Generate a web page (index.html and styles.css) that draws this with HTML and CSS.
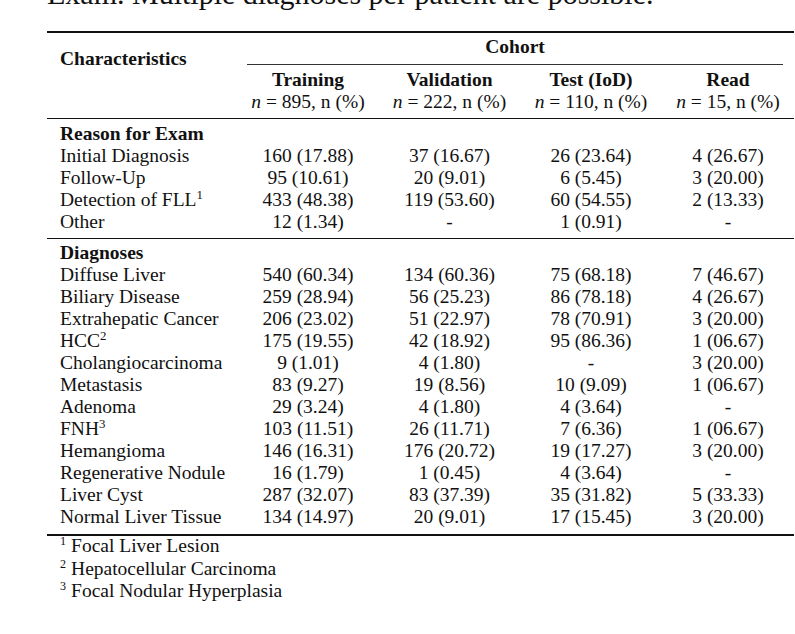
FILE: index.html
```html
<!DOCTYPE html>
<html>
<head>
<meta charset="utf-8">
<link rel="stylesheet" href="styles.css">
</head>
<body>
<div class="page">
  <p class="caption">Exam. Multiple diagnoses per patient are possible.</p>
  <table class="tbl">
    <colgroup>
      <col class="c-name"><col class="c-tr"><col class="c-va"><col class="c-te"><col class="c-re">
    </colgroup>
    <thead>
      <tr>
        <th class="char" rowspan="3">Characteristics</th>
        <th class="cohort" colspan="4"><div class="cmid">Cohort</div></th>
      </tr>
      <tr class="h2">
        <th>Training</th><th>Validation</th><th>Test (IoD)</th><th>Read</th>
      </tr>
      <tr class="h3">
        <td><i>n</i> = 895, n (%)</td><td><i>n</i> = 222, n (%)</td><td><i>n</i> = 110, n (%)</td><td><i>n</i> = 15, n (%)</td>
      </tr>
    </thead>
    <tbody class="grp g1">
      <tr class="first"><th class="sec" colspan="5">Reason for Exam</th></tr>
      <tr><td>Initial Diagnosis</td><td>160 (17.88)</td><td>37 (16.67)</td><td>26 (23.64)</td><td>4 (26.67)</td></tr>
      <tr><td>Follow-Up</td><td>95 (10.61)</td><td>20 (9.01)</td><td>6 (5.45)</td><td>3 (20.00)</td></tr>
      <tr><td>Detection of FLL<sup>1</sup></td><td>433 (48.38)</td><td>119 (53.60)</td><td>60 (54.55)</td><td>2 (13.33)</td></tr>
      <tr class="last"><td>Other</td><td>12 (1.34)</td><td>-</td><td>1 (0.91)</td><td>-</td></tr>
    </tbody>
    <tbody class="grp g2">
      <tr class="first"><th class="sec" colspan="5">Diagnoses</th></tr>
      <tr><td>Diffuse Liver</td><td>540 (60.34)</td><td>134 (60.36)</td><td>75 (68.18)</td><td>7 (46.67)</td></tr>
      <tr><td>Biliary Disease</td><td>259 (28.94)</td><td>56 (25.23)</td><td>86 (78.18)</td><td>4 (26.67)</td></tr>
      <tr><td>Extrahepatic Cancer</td><td>206 (23.02)</td><td>51 (22.97)</td><td>78 (70.91)</td><td>3 (20.00)</td></tr>
      <tr><td>HCC<sup>2</sup></td><td>175 (19.55)</td><td>42 (18.92)</td><td>95 (86.36)</td><td>1 (06.67)</td></tr>
      <tr><td>Cholangiocarcinoma</td><td>9 (1.01)</td><td>4 (1.80)</td><td>-</td><td>3 (20.00)</td></tr>
      <tr><td>Metastasis</td><td>83 (9.27)</td><td>19 (8.56)</td><td>10 (9.09)</td><td>1 (06.67)</td></tr>
      <tr><td>Adenoma</td><td>29 (3.24)</td><td>4 (1.80)</td><td>4 (3.64)</td><td>-</td></tr>
      <tr><td>FNH<sup>3</sup></td><td>103 (11.51)</td><td>26 (11.71)</td><td>7 (6.36)</td><td>1 (06.67)</td></tr>
      <tr><td>Hemangioma</td><td>146 (16.31)</td><td>176 (20.72)</td><td>19 (17.27)</td><td>3 (20.00)</td></tr>
      <tr><td>Regenerative Nodule</td><td>16 (1.79)</td><td>1 (0.45)</td><td>4 (3.64)</td><td>-</td></tr>
      <tr><td>Liver Cyst</td><td>287 (32.07)</td><td>83 (37.39)</td><td>35 (31.82)</td><td>5 (33.33)</td></tr>
      <tr class="last"><td>Normal Liver Tissue</td><td>134 (14.97)</td><td>20 (9.01)</td><td>17 (15.45)</td><td>3 (20.00)</td></tr>
    </tbody>
  </table>
  <ul class="notes">
    <li><sup>1</sup>Focal Liver Lesion</li>
    <li><sup>2</sup>Hepatocellular Carcinoma</li>
    <li><sup>3</sup>Focal Nodular Hyperplasia</li>
  </ul>
</div>
</body>
</html>
```
FILE: styles.css
```css
html, body {
  margin: 0;
  padding: 0;
  background: #ffffff;
}
body {
  font-family: "Liberation Serif", "Times New Roman", serif;
  color: #111111;
}
.page {
  padding-left: 47px;
  overflow: hidden;
  height: 634px;
}
.caption {
  margin: -21px 0 0 0;
  font-size: 30px;
  line-height: 30px;
  white-space: nowrap;
}
.tbl {
  margin-top: 22px;
  width: 747px;
  table-layout: fixed;
  border-collapse: collapse;
  border-spacing: 0;
  border-top: 2px solid #111;
  border-bottom: 2px solid #111;
  font-size: 19.5px;
  line-height: 22px;
}
.c-name { width: 190px; }
.c-tr { width: 142px; }
.c-va { width: 141px; }
.c-te { width: 142px; }
.c-re { width: 132px; }
.tbl th, .tbl td {
  padding: 0;
  text-align: center;
  white-space: nowrap;
  vertical-align: top;
}
.tbl th { font-weight: bold; }
.tbl .char {
  text-align: left;
  padding: 15px 0 0 13px;
}
.tbl .cohort {
  padding-top: 3px;
}
.cmid {
  margin: 0 11px 0 10px;
  padding-bottom: 6px;
  border-bottom: 1px solid #333;
}
.h2 th { padding-top: 4px; }
.h3 td { padding-top: 0; padding-bottom: 5px; }
.grp { border-top: 1px solid #111; }
.tbl tbody td:first-child,
.tbl tbody .sec {
  text-align: left;
  padding-left: 13px;
}
.g1 .first th { padding-top: 4px; }
.g1 .last td { padding-bottom: 5px; }
.g2 .first th { padding-top: 3px; }
.g2 .last td { padding-bottom: 6px; }
sup {
  font-size: 0.66em;
  line-height: 0;
  vertical-align: 0.55em;
}
.notes {
  list-style: none;
  margin: -1px 0 0 0;
  padding: 0 0 0 13px;
  font-size: 19.5px;
  line-height: 22.5px;
}
.notes sup {
  font-size: 0.62em;
  margin-right: 5px;
}
```
